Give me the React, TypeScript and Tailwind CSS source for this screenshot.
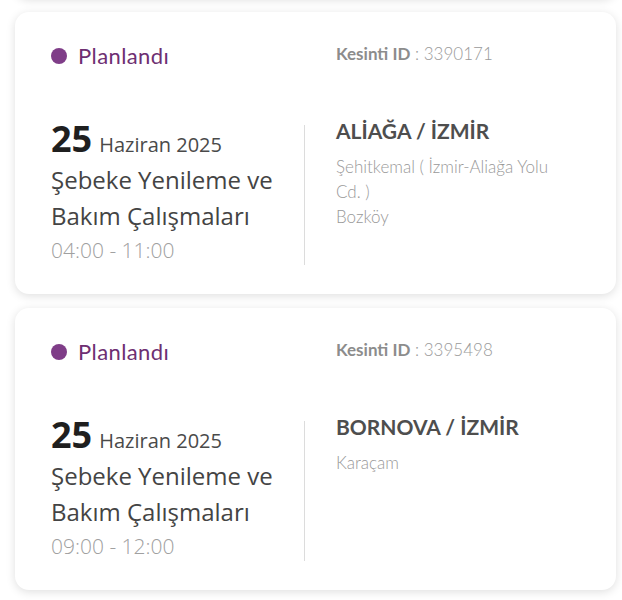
import React from "react";

type Outage = {
  id: string;
  day: string;
  month: string;
  title: string[];
  time: string;
  place: string;
  lines: string[];
};

const outages: Outage[] = [
  {
    id: "3390171",
    day: "25",
    month: "Haziran 2025",
    title: ["Şebeke Yenileme ve", "Bakım Çalışmaları"],
    time: "04:00 - 11:00",
    place: "ALİAĞA / İZMİR",
    lines: ["Şehitkemal ( İzmir-Aliağa Yolu", "Cd. )", "Bozköy"],
  },
  {
    id: "3395498",
    day: "25",
    month: "Haziran 2025",
    title: ["Şebeke Yenileme ve", "Bakım Çalışmaları"],
    time: "09:00 - 12:00",
    place: "BORNOVA / İZMİR",
    lines: ["Karaçam"],
  },
];

const geo = { fontFamily: "Lato, 'Noto Sans', sans-serif" };
const hum = { fontFamily: "'Open Sans', 'Noto Sans', sans-serif" };

const Card = ({ o }: { o: Outage }) => (
  <div className="bg-white rounded-[14px] shadow-[0_2px_10px_rgba(0,0,0,0.13)] px-[36px] pt-[30px] pb-[30px] h-[282px] shrink-0">
    {/* status row */}
    <div className="grid grid-cols-[254px_1fr]" style={geo}>
      <div className="flex items-center gap-[11px] h-[27px]">
        <span className="w-[16px] h-[16px] rounded-full bg-[#7f3d88]" />
        <span className="text-[22px] tracking-[0.4px] text-[#6e2f72]">Planlandı</span>
      </div>
      <div className="pl-[31px] flex items-center h-[24px] text-[17px] text-[#9a9a9a]">
        <span className="font-bold text-[#8c8c8c]">Kesinti ID</span>
        <span className="font-light">&nbsp;: {o.id}</span>
      </div>
    </div>

    {/* body */}
    <div className="grid grid-cols-[254px_1fr] mt-[56px]">
      <div className="border-r border-[#dcdcdc] pr-4" style={hum}>
        <div className="flex items-baseline gap-[7px] leading-[36px] -mt-[4px]">
          <span className="text-[36px] font-bold text-[#1f1f1f]">{o.day}</span>
          <span className="text-[20px] text-[#4a4a4a]">{o.month}</span>
        </div>
        <div className="text-[24px] leading-[36px] text-[#444] -mt-[1px]">
          {o.title.map((t) => (
            <div key={t}>{t}</div>
          ))}
        </div>
        <div className="text-[21px] leading-[30px] font-light text-[#a0a0a0] mt-[1px]">{o.time}</div>
      </div>
      <div className="pl-[31px]" style={geo}>
        <div className="text-[21px] font-bold text-[#4e4e4e] leading-[28px] -mt-[8px]">{o.place}</div>
        <div className="mt-[9px] text-[17px] leading-[25px] font-light text-[#999]">
          {o.lines.map((l) => (
            <div key={l}>{l}</div>
          ))}
        </div>
      </div>
    </div>
  </div>
);

export default function App() {
  return (
    <div className="min-h-screen bg-white overflow-hidden">
      <div className="flex flex-col gap-[14px] px-[15px] pr-[6px] -mt-[88px]">
        <div className="bg-white rounded-[14px] shadow-[0_2px_10px_rgba(0,0,0,0.13)] h-[86px] shrink-0" />
        {outages.map((o) => (
          <Card key={o.id} o={o} />
        ))}
      </div>
    </div>
  );
}
